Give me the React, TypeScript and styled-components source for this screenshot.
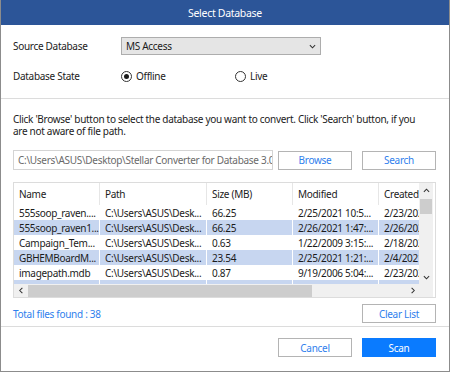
import styled, { createGlobalStyle } from 'styled-components';

const GlobalStyle = createGlobalStyle`
  html, body {
    margin: 0;
    padding: 0;
    background: #ffffff;
  }
  * {
    box-sizing: border-box;
  }
`;

const Window = styled.div`
  width: 450px;
  height: 372px;
  display: flex;
  flex-direction: column;
  border: 1px solid #8c8c8c;
  border-top: none;
  background: #ffffff;
  font-family: 'Noto Sans', 'Liberation Sans', sans-serif;
  font-size: 10px;
  letter-spacing: -0.3px;
  color: #1b1b1b;
  overflow: hidden;
`;

const TitleBar = styled.div`
  height: 25px;
  flex: none;
  background: #2c5598;
  color: #ffffff;
  display: flex;
  align-items: center;
  justify-content: center;
  font-size: 10.5px;
`;

const TopSection = styled.div`
  height: 74px;
  flex: none;
  padding: 12px 12px 0 12px;
  display: flex;
  flex-direction: column;
  gap: 12px;
  border-bottom: 1px solid #dcdcdc;
`;

const FieldRow = styled.div`
  display: flex;
  align-items: center;
  height: 18px;
`;

const Label = styled.div`
  width: 108px;
  flex: none;
`;

const Select = styled.div`
  width: 200px;
  height: 18px;
  background: #e5e5e5;
  border: 1px solid #adadad;
  display: flex;
  align-items: center;
  justify-content: space-between;
  padding: 0 4px 0 4px;
`;

const RadioGroup = styled.div`
  display: flex;
  align-items: center;
`;

const RadioOption = styled.label<{ $width?: number }>`
  display: flex;
  align-items: center;
  gap: 4px;
  width: ${p => (p.$width ? `${p.$width}px` : 'auto')};
`;

const RadioCircle = styled.span<{ $checked?: boolean }>`
  width: 11px;
  height: 11px;
  border-radius: 50%;
  border: 1px solid #333333;
  display: flex;
  align-items: center;
  justify-content: center;
  &::after {
    content: '';
    width: 5px;
    height: 5px;
    border-radius: 50%;
    background: ${p => (p.$checked ? '#1b1b1b' : 'transparent')};
  }
`;

const Body = styled.div`
  flex: none;
  height: 228px;
  padding: 14px 13px 0 12px;
  display: flex;
  flex-direction: column;
  border-bottom: 1px solid #dcdcdc;
`;

const Hint = styled.p`
  margin: 0;
  line-height: 12px;
  height: 24px;
  white-space: nowrap;
`;

const PathRow = styled.div`
  margin-top: 13px;
  display: flex;
  align-items: center;
  gap: 5px;
`;

const PathInput = styled.div`
  width: 262px;
  height: 20px;
  border: 1px solid #d4d4d4;
  color: #6a6a6a;
  padding: 0 4px;
  display: flex;
  align-items: center;
  white-space: nowrap;
  overflow: hidden;
`;

const Button = styled.button<{ $primary?: boolean }>`
  width: 74px;
  height: 19px;
  border: 1px solid ${p => (p.$primary ? '#0a7bff' : '#b4b4b4')};
  background: ${p => (p.$primary ? '#0a7bff' : '#ffffff')};
  color: ${p => (p.$primary ? '#ffffff' : '#2f80ed')};
  font-family: inherit;
  font-size: 10px;
  letter-spacing: -0.3px;
  padding: 0;
  cursor: pointer;
`;

const ButtonPair = styled.div`
  display: flex;
  gap: 10px;
  margin-left: auto;
`;

const Table = styled.div`
  margin-top: 12px;
  height: 116px;
  border: 1px solid #dcdcdc;
  display: grid;
  grid-template-columns: 1fr 14px;
  grid-template-rows: 1fr 13px;
  padding-right: 2px;
`;

const ListArea = styled.div`
  overflow: hidden;
  display: flex;
  flex-direction: column;
`;

const Row = styled.div<{ $selected?: boolean; $header?: boolean }>`
  display: grid;
  grid-template-columns: 86px 107px 86px 86px 86px;
  height: ${p => (p.$header ? '22px' : '15px')};
  flex: none;
  white-space: nowrap;
  & > div {
    background: ${p => (p.$selected ? '#c7d6f0' : '#ffffff')};
    border-right: 1px solid ${p => (p.$header ? '#e6e6e6' : '#ffffff')};
    padding-left: 5px;
    display: flex;
    align-items: center;
    overflow: hidden;
  }
`;

const VScroll = styled.div`
  background: #f0f0f0;
  display: flex;
  flex-direction: column;
  align-items: center;
`;

const ScrollArrow = styled.div`
  height: 14px;
  width: 14px;
  display: flex;
  align-items: center;
  justify-content: center;
  flex: none;
`;

const VThumb = styled.div`
  width: 12px;
  height: 15px;
  background: #cdcdcd;
  margin-top: 2px;
`;

const HScroll = styled.div`
  background: #f0f0f0;
  display: flex;
  align-items: center;
`;

const HThumb = styled.div`
  width: 284px;
  height: 12px;
  background: #cdcdcd;
`;

const Spacer = styled.div`
  flex: 1;
`;

const Corner = styled.div`
  background: #f0f0f0;
`;

const FooterRow = styled.div`
  margin-top: 6px;
  display: flex;
  align-items: center;
  justify-content: space-between;
`;

const Total = styled.div`
  color: #2f80ed;
`;

const Actions = styled.div`
  flex: none;
  padding: 11px 13px 0 12px;
  display: flex;
`;

const Chevron = ({ dir, size = 7 }: { dir: 'up' | 'down' | 'left' | 'right'; size?: number }) => {
  const paths = {
    down: 'M1 2.5 L4 5.5 L7 2.5',
    up: 'M1 5.5 L4 2.5 L7 5.5',
    left: 'M5 1 L2 4 L5 7',
    right: 'M3 1 L6 4 L3 7',
  };
  return (
    <svg width={size} height={size} viewBox="0 0 8 8">
      <path d={paths[dir]} fill="none" stroke="#333" strokeWidth="1.2" />
    </svg>
  );
};

const rows = [
  { name: '555soop_raven....', path: 'C:\\Users\\ASUS\\Desk...', size: '66.25', modified: '2/25/2021 10:5...', created: '2/23/2021', selected: false },
  { name: '555soop_raven1...', path: 'C:\\Users\\ASUS\\Desk...', size: '66.25', modified: '2/26/2021 1:47:...', created: '2/26/2021', selected: true },
  { name: 'Campaign_Tem...', path: 'C:\\Users\\ASUS\\Desk...', size: '0.63', modified: '1/22/2009 3:15:...', created: '2/18/2021', selected: false },
  { name: 'GBHEMBoardM...', path: 'C:\\Users\\ASUS\\Desk...', size: '23.54', modified: '2/25/2021 1:21:...', created: '2/4/2021', selected: true },
  { name: 'imagepath.mdb', path: 'C:\\Users\\ASUS\\Desk...', size: '0.87', modified: '9/19/2006 5:04:...', created: '2/23/2021', selected: false },
  { name: '', path: '', size: '', modified: '', created: '', selected: true },
];

function App() {
  return (
    <>
      <GlobalStyle />
      <Window>
        <TitleBar>Select Database</TitleBar>
        <TopSection>
          <FieldRow>
            <Label>Source Database</Label>
            <Select>
              <span>MS Access</span>
              <Chevron dir="down" />
            </Select>
          </FieldRow>
          <FieldRow>
            <Label>Database State</Label>
            <RadioGroup>
              <RadioOption $width={114}>
                <RadioCircle $checked />
                Offline
              </RadioOption>
              <RadioOption>
                <RadioCircle />
                Live
              </RadioOption>
            </RadioGroup>
          </FieldRow>
        </TopSection>
        <Body>
          <Hint>
            Click 'Browse' button to select the database you want to convert. Click 'Search' button, if you
            <br />
            are not aware of file path.
          </Hint>
          <PathRow>
            <PathInput>C:\Users\ASUS\Desktop\Stellar Converter for Database 3.0</PathInput>
            <ButtonPair>
              <Button>Browse</Button>
              <Button>Search</Button>
            </ButtonPair>
          </PathRow>
          <Table>
            <ListArea>
              <Row $header>
                <div>Name</div>
                <div>Path</div>
                <div>Size (MB)</div>
                <div>Modified</div>
                <div>Created</div>
              </Row>
              {rows.map((r, i) => (
                <Row key={i} $selected={r.selected}>
                  <div>{r.name}</div>
                  <div>{r.path}</div>
                  <div>{r.size}</div>
                  <div>{r.modified}</div>
                  <div>{r.created}</div>
                </Row>
              ))}
            </ListArea>
            <VScroll>
              <ScrollArrow>
                <Chevron dir="up" />
              </ScrollArrow>
              <VThumb />
              <Spacer />
              <ScrollArrow>
                <Chevron dir="down" />
              </ScrollArrow>
            </VScroll>
            <HScroll>
              <ScrollArrow>
                <Chevron dir="left" />
              </ScrollArrow>
              <HThumb />
              <Spacer />
              <ScrollArrow>
                <Chevron dir="right" />
              </ScrollArrow>
            </HScroll>
            <Corner />
          </Table>
          <FooterRow>
            <Total>Total files found : 38</Total>
            <Button>Clear List</Button>
          </FooterRow>
        </Body>
        <Actions>
          <ButtonPair>
            <Button>Cancel</Button>
            <Button $primary>Scan</Button>
          </ButtonPair>
        </Actions>
      </Window>
    </>
  );
}

export default App;
